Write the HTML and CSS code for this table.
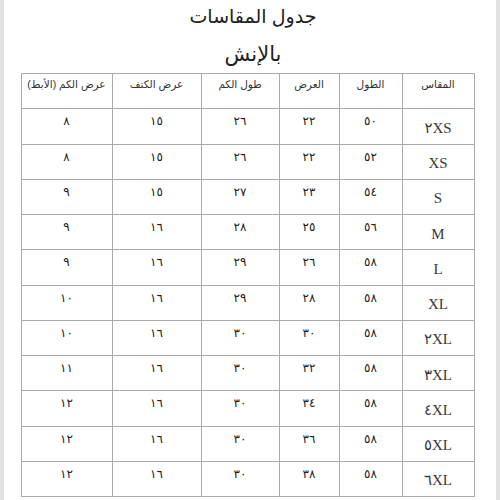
FILE: index.html
```html
<!DOCTYPE html>
<html lang="ar" dir="rtl">
<head>
<meta charset="utf-8">
<link rel="stylesheet" href="styles.css">
</head>
<body>
<div class="page">
  <h1 class="title">جدول المقاسات</h1>
  <h2 class="subtitle">بالإنش</h2>
  <table class="chart">
    <colgroup>
      <col class="c-size"><col class="c-len"><col class="c-wid"><col class="c-slv"><col class="c-shd"><col class="c-arm">
    </colgroup>
    <thead>
      <tr><th>المقاس</th><th>الطول</th><th>العرض</th><th>طول الكم</th><th>عرض الكتف</th><th>عرض الكم (الأبط)</th></tr>
    </thead>
    <tbody>
      <tr><td class="size">٢XS</td><td>٥٠</td><td>٢٢</td><td>٢٦</td><td>١٥</td><td>٨</td></tr>
      <tr><td class="size">XS</td><td>٥٢</td><td>٢٢</td><td>٢٦</td><td>١٥</td><td>٨</td></tr>
      <tr><td class="size">S</td><td>٥٤</td><td>٢٣</td><td>٢٧</td><td>١٥</td><td>٩</td></tr>
      <tr><td class="size">M</td><td>٥٦</td><td>٢٥</td><td>٢٨</td><td>١٦</td><td>٩</td></tr>
      <tr><td class="size">L</td><td>٥٨</td><td>٢٦</td><td>٢٩</td><td>١٦</td><td>٩</td></tr>
      <tr><td class="size">XL</td><td>٥٨</td><td>٢٨</td><td>٢٩</td><td>١٦</td><td>١٠</td></tr>
      <tr><td class="size">٢XL</td><td>٥٨</td><td>٣٠</td><td>٣٠</td><td>١٦</td><td>١٠</td></tr>
      <tr><td class="size">٣XL</td><td>٥٨</td><td>٣٢</td><td>٣٠</td><td>١٦</td><td>١١</td></tr>
      <tr><td class="size">٤XL</td><td>٥٨</td><td>٣٤</td><td>٣٠</td><td>١٦</td><td>١٢</td></tr>
      <tr><td class="size">٥XL</td><td>٥٨</td><td>٣٦</td><td>٣٠</td><td>١٦</td><td>١٢</td></tr>
      <tr><td class="size">٦XL</td><td>٥٨</td><td>٣٨</td><td>٣٠</td><td>١٦</td><td>١٢</td></tr>
    </tbody>
  </table>
</div>
</body>
</html>
```

FILE: styles.css
```css
html, body {
  margin: 0;
  padding: 0;
}
body {
  background: #e2e2e2;
  width: 500px;
  height: 500px;
  overflow: hidden;
}
.page {
  margin: 0 4px;
  height: 500px;
  background: #ffffff;
  color: #222222;
  font-family: "Liberation Sans", "DejaVu Sans", sans-serif;
  display: flex;
  flex-direction: column;
  align-items: center;
  padding-top: 5px;
  box-sizing: border-box;
}
.title {
  margin: 0;
  font-size: 19px;
  font-weight: normal;
  line-height: 24px;
  padding-left: 6px;
}
.subtitle {
  margin: 11px 0 0 0;
  font-size: 21px;
  font-weight: normal;
  line-height: 28px;
  padding-left: 6px;
}
.chart {
  margin-top: 5px;
  margin-right: 5px;
  border-collapse: collapse;
  width: 453px;
  table-layout: fixed;
  font-family: "Liberation Serif", "DejaVu Sans", serif;
}
.c-size { width: 72px; }
.c-len { width: 63px; }
.c-wid { width: 60px; }
.c-slv { width: 78px; }
.c-shd { width: 89px; }
.c-arm { width: 91px; }
.chart th,
.chart td {
  border: 1px solid #ababab;
  height: 35.25px;
  padding: 0;
  text-align: center;
  vertical-align: top;
  box-sizing: border-box;
}
.chart th {
  font-family: "Liberation Sans", "DejaVu Sans", sans-serif;
  font-weight: normal;
  font-size: 10.5px;
  line-height: 14px;
  padding-top: 3px;
  color: #333333;
}
.chart td {
  font-size: 12px;
  line-height: 16px;
  padding-top: 4px;
}
.chart td.size {
  vertical-align: middle;
  padding-top: 3px;
  font-size: 15px;
  color: #3a3a3a;
}
```
